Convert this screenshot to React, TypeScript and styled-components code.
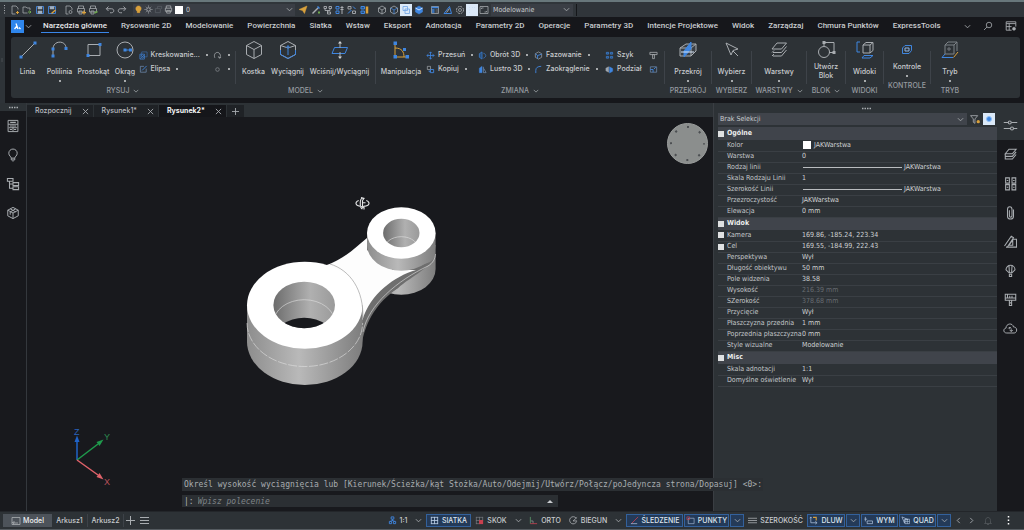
import React from 'react';
import styled, { createGlobalStyle, css } from 'styled-components';

const ui = `Roboto, "Liberation Sans", sans-serif`;
const label = `Inter, Roboto, sans-serif`;
const grid = `"DejaVu Sans Condensed", "DejaVu Sans", sans-serif`;
const mono = `"DejaVu Sans Mono", "Liberation Mono", monospace`;

const c = {
  panel: '#2d3236',
  dark: '#16171b',
  canvas: '#18191d',
  field: '#40444b',
  text: '#c9cccf',
  blue: '#3f86e0',
  icon: '#a9adb1',
  orange: '#d9a13c',
};

const Global = createGlobalStyle`
  *, *::before, *::after { box-sizing: border-box; }
  body { margin: 0; background: ${c.panel}; color: ${c.text}; font: 500 8px/10px ${ui}; }
  button, input, select { font: inherit; color: inherit; background: none; border: 0; padding: 0; margin: 0; border-radius: 0; }
  button { cursor: pointer; white-space: nowrap; }
  svg { display: block; flex: none; fill: none; stroke: ${c.icon}; stroke-width: 1; }
`;

const Page = styled.div`
  min-height: 100vh;
  display: flex;
  flex-direction: column;
  border-top: 2px solid #68777b;
  overflow: hidden;
`;

/* ---------- icons ---------- */
type IconProps = { s?: number; v?: string; children: React.ReactNode };
const Ico = ({ s = 20, v = '0 0 20 20', children }: IconProps) => (
  <svg width={s} height={s} viewBox={v} aria-hidden="true">{children}</svg>
);
const Chevron = ({ s = 7 }: { s?: number }) => (
  <Ico s={s} v="0 0 8 8"><path d="M1 2.5 4 5.5 7 2.5" stroke="#a5a9ad" /></Ico>
);
const B = c.blue;
const O = c.orange;

const art: Record<string, React.ReactNode> = {
  line: <><path d="M3 17 17 3" /><g fill={B} stroke="none"><path d="M1.500 15.500h3v3h-3zM15.500 1.500h3v3h-3z" /></g></>,
  poly: <><path d="M3 15V9C3 0 16 0 16 8" /><g fill={B} stroke="none"><path d="M1.500 14.500h3v3h-3zM1.500 7.500h3v3h-3zM14.500 7h3v3h-3z" /></g></>,
  rect: <><path d="M4 4.500h12v11H4z" /><g fill={B} stroke="none"><path d="M2.500 14h3v3h-3zM14.500 3h3v3h-3z" /></g></>,
  circle: <><circle cx="10" cy="10" r="8" /><path d="M10 10h7" stroke={B} /><g fill={B} stroke="none"><path d="M8.500 8.500h3v3h-3zM14 8.500h3v3h-3z" /></g></>,
  box: <><path d="M10 1.500 17.500 5.500v9L10 18.500 2.500 14.500v-9zM2.500 5.500 10 9.500l7.500-4M10 9.500v9" /></>,
  extrude: <><path d="M10 1.500 17.500 5.500v9L10 18.500 2.500 14.500v-9zM2.500 5.500 10 8l7.500-2.500" /><path d="M2.500 14.500 10 18.500l7.500-4M10 15V6M8 8l2-2.500L12 8M2.500 10v4.500M17.500 10v4.500" stroke={B} /></>,
  push: <><path d="M4.500 7.500h13L15 13.500H2z" stroke={B} /><path d="M10 2v6M10 12v6" /><g fill="#d0d3d5" stroke="none"><path d="M8 3.500 10 1l2 2.500zM8 16.500l2 2.500 2-2.500z" /></g></>,
  manip: <><path d="M4 4v13M4 17h12M4 8c7 0 9 4 9 9" stroke={O} /><g fill={B} stroke="none"><path d="M2.500 1.500h3.500v3.500H2.500zM2.500 15h3.500v3.500H2.500zM14.500 15h3.500v3.500h-3.500zM12 8h3v3h-3z" /></g></>,
  section: <><path d="M2 8 8 4h10v7l-5 5H2z" fill="#3b4046" /><path d="M2 8h11l5-4M13 8v8" /><path d="M6 17V11L13 2v7z" fill={B} stroke={B} /><path d="M3 12h13" stroke="#d5e4f7" /></>,
  cursor: <path d="M4 3 16 9l-5 1.500L9 15z M11 11l5 5" />,
  layers: <><path d="M3 9 8 3h9.500l-5 6z" /><path d="M4 12.500H12.500l5-6M4 16H12.500l5-6" /><path d="M3 12.500l2-2M3 16l2-2" /></>,
  block: <><path d="M8 2.500h10v10h-5" /><path d="M8 2.500V6" /><circle cx="8" cy="12" r="5.500" /><g fill={c.icon} stroke="none"><path d="M6.500 1h3v3h-3zM16.500 11h3v3h-3z" /></g></>,
  views: <><path d="M8 5 11 2.500h7v8L15 13H8zM8 5h7v8M15 5l3-2.500" /><path d="M5 2H2v10h3M7 18l2-2.500h9L15 18z" stroke={B} /></>,
  control: <><path d="M5.500 8 8 5.500h6.500v5L12 13.500H5.500z" stroke={B} /><path d="M8 8h4v3H8z" stroke="#8fb5e6" /></>,
  mode: <><path d="M5 5 8 2h9v9M5 5h9v9M14 5l3-3M5 5v9h9" stroke="#7d8287" /><path d="M9 7v4M7 9h4" stroke="#72777c" /><path d="M5 14l-3 3.500h11" stroke={B} /><path d="M18 12l-4.500 5.500" stroke={O} /></>,
  hatch: <><path d="M6 2h12v11H6z" stroke={B} /><path d="M2 7h10v11H2zM3 17 12 8M7 17l5-5M3 12l4-4" stroke={B} strokeWidth="1.500" /></>,
  ellipse: <><path d="M3 3v13h13V8M3 3h8" stroke="#7695bd" strokeWidth="1.500" /><path d="M7 12 17 2" stroke={B} strokeWidth="2" /></>,
  arc: <path d="M4 15C0 4 11 0 15 6s-1 9-1 9M12 12l2 4 4-2" strokeWidth="1.800" />,
  dotc: <circle cx="10" cy="10" r="4" stroke="#767b80" strokeWidth="2" />,
  move: <path d="M10 2v16M2 10h16M7 5l3-3 3 3M7 15l3 3 3-3M5 7l-3 3 3 3M15 7l3 3-3 3" stroke={B} strokeWidth="1.800" />,
  copy: <><path d="M3 3h7v7H3z" strokeWidth="1.500" /><path d="M10 10h7v7h-7zM7 12v3h3" stroke={B} strokeWidth="2" /></>,
  rot: <><path d="M9 2v16L3 14V6z" stroke={B} fill="#28517f" strokeWidth="1.500" /><path d="M12 5c7 2 7 8 0 11" strokeWidth="1.500" stroke={B} /></>,
  mirror: <><path d="M9 3v14H3V7z" fill={B} stroke={B} /><path d="M12 4v13h6L13 8" stroke="#7695bd" strokeWidth="1.500" /></>,
  chamfer: <><path d="M10 2l7 4v8l-7 4-7-4V6z" strokeWidth="1.500" /><path d="M3 6l5 4v7M8 10l9-3" stroke={B} strokeWidth="2" /></>,
  fillet: <path d="M4 18V12C4 6 8 3 16 3" stroke={B} strokeWidth="2" />,
  array: <path d="M3 3h5v4H3zM12 3h5v4h-5zM3 12h5v4H3zM12 12h5v4h-5z" stroke={B} strokeWidth="1.500" fill="#28517f" />,
  split: <><path d="M2 7l6-3v12l-6-3z" fill="#9aa6b3" /><path d="M10 4l7 4v6l-7 4z" fill={B} stroke={B} /></>,
  hammer: <path d="M2 3h16v5H2zM8 8h4v9H8z" strokeWidth="1.800" />,
  scale: <><path d="M3 4h14v12H3z" strokeWidth="1.500" stroke="#7695bd" /><path d="M3 10h6v6M11 9l4-4" stroke={B} strokeWidth="2" /></>,
  newf: <><path d="M4 2h8l4 4v3M4 2v16h7" strokeWidth="1.500" /><path d="M15 12v6M12 15h6" stroke={O} strokeWidth="2" /></>,
  open: <><path d="M2 16V4h6l2 2h6v4M2 16h9" strokeWidth="1.500" /><path d="M12 14h6M15 11l3 3-3 3" stroke="#6ea84f" strokeWidth="2" /></>,
  save: <><path d="M3 3h14v14H3z" stroke={B} strokeWidth="1.800" /><path d="M6 3h8v5H6zM6 12h8v5H6z" fill="#9fb0c2" /></>,
  saveas: <><path d="M3 3h14v14H3z" stroke={B} strokeWidth="1.800" /><path d="M6 3h8v5H6z" fill="#9fb0c2" /><path d="M9 17l8-7" stroke={O} strokeWidth="3" /></>,
  preview: <><path d="M4 2h8l4 4v4M4 2v16h5" strokeWidth="1.500" /><circle cx="13" cy="14" r="3" strokeWidth="1.500" /></>,
  print: <path d="M5 7V2h10v5M3 7h14v7H3zM6 12h8v6H6z" strokeWidth="1.800" />,
  printy: <><path d="M5 7V2h10v5M3 7h14v7H3zM6 12h6v6H6z" strokeWidth="1.500" /><path d="M16 11v8M12 15h8" stroke={O} strokeWidth="2.500" /></>,
  printg: <><path d="M5 7V2h10v5M3 7h14v7H3zM6 12h6v6H6z" strokeWidth="1.500" /><path d="M13 16l6-3" stroke="#6ea84f" strokeWidth="3" /></>,
  undo: <path d="M7 3 2.500 7.500 7 12M3 7.500h10c6 0 6 8 0 8h-3" strokeWidth="1.800" />,
  redo: <path d="M13 3l4.500 4.500L13 12M17 7.500H7c-6 0-6 8 0 8h3" strokeWidth="1.800" />,
  bulb: <path d="M7 14C1 8 5 2 10 2s9 6 3 12v3H7z" fill={O} stroke={O} />,
  sun: <><circle cx="10" cy="10" r="4" strokeWidth="2" /><path d="M10 1v3M10 16v3M1 10h3M16 10h3M4 4l2 2M14 14l2 2M16 4l-2 2M4 16l2-2" strokeWidth="1.500" /></>,
  lock: <path d="M3 8h11v9H3zM8 8V3h9v6" stroke="#5d6268" strokeWidth="1.500" />,
  arrowO: <path d="M2 9 18 2l-5 15-4-6z" fill={O} stroke={O} />,
  brush: <><path d="M3 17 14 6" strokeWidth="3" /><path d="M13 3l4 4" stroke={B} strokeWidth="3" /><path d="M14 15h4" stroke="#6ea84f" strokeWidth="4" /></>,
  tree: <path d="M2 3h5v4H2zM12 3h5v4h-5zM4 7v4h10V7M9 11v5M9 14h6v4H9z" strokeWidth="1.800" />,
  treeB: <><path d="M2 3h6v5H2zM2 12h6v5H2z" stroke={B} strokeWidth="2" /><path d="M14 2v16M11 5h6M11 9h6" strokeWidth="2" /></>,
  treeO: <><path d="M2 3h6v5H2zM11 12h6v5h-6z" strokeWidth="1.800" /><path d="M12 3l5 5M2 17l7-7" stroke={B} strokeWidth="2" /></>,
  listO: <><path d="M2 3h7v5H2zM2 12h7v5H2z" stroke={B} strokeWidth="2" fill="#28517f" /><path d="M14 3v14" stroke={O} strokeWidth="5" /></>,
  boxS: <path d="M10 2l7 4v8l-7 4-7-4V6zM3 6l7 4 7-4M10 10v8" strokeWidth="1.500" />,
  boxB: <><path d="M10 2l7 4v8l-7 4-7-4V6z" strokeWidth="1.500" /><path d="M3 6l7 4 7-4M10 10v8" stroke={B} strokeWidth="1.500" /></>,
  boxF: <><path d="M10 2l7 4v8l-7 4-7-4V6z" fill={B} stroke={B} /><path d="M3 6l7 4 7-4" stroke="#cfe2fa" strokeWidth="2" /></>,
  boxW: <path d="M4 3h9v8H4zM8 8h9v9H8z" stroke="#6aa0e6" strokeWidth="1.500" />,
  tableB: <><path d="M3 3h14v14H3z" strokeWidth="1.500" /><path d="M3 5h14M4 10h5M4 14h5" stroke={B} strokeWidth="3" /><path d="M11 10h5M11 14h5" /></>,
  draft: <><path d="M2 17 13 3l4 14z" stroke={B} strokeWidth="2" /><path d="M7 15l6-8" strokeWidth="2" /></>,
  gear: <><circle cx="10" cy="10" r="7" strokeWidth="2" strokeDasharray="3.500 2" /><circle cx="10" cy="10" r="3" strokeWidth="1.500" /></>,
  blank: <path d="M5 5h1M10 5h1M15 5h1M5 10h1M5 15h1" stroke="#9cc2ee" />,
  win: <><path d="M2 3h16v14H2z" strokeWidth="1.500" /><path d="M5 8V6h4M15 12v2h-4" strokeWidth="1.500" /></>,
  calc: <><path d="M3 2h14v16H3zM3 7.500h14M10 8v9M4 12.500h12" strokeWidth="1.400" /><path d="M6 4.800h8M5.500 10h3M11.500 10h3M5.500 15h3M11.500 15h3" strokeWidth="1.500" /></>,
  bulbO: <path d="M7.500 14.500C7.500 12 4 11.500 4 7.500a6 6 0 0 1 12 0c0 4-3.500 4.500-3.500 7zM7.500 14.500v2.500h5v-2.500M9 18.500h2" strokeWidth="1.400" />,
  struct: <path d="M2 2h8v4H2zM5 6v10h5M5 10h5M10 8h8v4h-8zM10 14h8v4h-8z" strokeWidth="1.500" />,
  cube: <path d="M10 2l7.500 4v8L10 18l-7.500-4V6zM2.500 6 10 10l7.500-4M10 10v8M6 4l8 4.500M14 4 6 8.500v4" strokeWidth="1.400" />,
  sliders: <><path d="M1 6h6M11 6h8M1 14h9M14 14h5" strokeWidth="1.400" /><circle cx="9" cy="6" r="2" strokeWidth="1.400" /><circle cx="12" cy="14" r="2" strokeWidth="1.400" /></>,
  layersR: <path d="M3 9 8 3h9.500l-5 6zM3 9v3.500h9.500l5-6M3 12.500V16h9.500l5-6" strokeWidth="1.400" />,
  grid4: <path d="M3.500 2.500h5v7h-5zM12 2.500h5v7h-5zM3.500 11.500h5v7h-5zM12 11.500h5v7h-5zM5 6h2M13.500 6h2M5 15h2M13.500 15h2" strokeWidth="1.400" />,
  clip: <path d="M14 6v9c0 5-8 5-8 0V6c0-5 6-5 6 0v8c0 3-3.500 3-3.500 0V7" strokeWidth="1.400" />,
  tri: <path d="M2 16 11 3l3 2-8 12M4 17.500h14V7h-4.500M8 15l5-7v7z" strokeWidth="1.400" />,
  balloon: <path d="M8 13 4 9a6 6 0 1 1 12 0l-4 4zM8.500 13 8 4M11.500 13 12 4M8.500 15v3h3v-3z" strokeWidth="1.400" />,
  paint: <path d="M3 3h14v8H3zM3 8h14M6 3v5M9 5v3M12 5v3M8.500 11v3M11.500 11v3M8.500 14.500h3V18h-3z" strokeWidth="1.400" />,
  cloud: <path d="M5 16c-5 0-5-6-1-6.500C4 3 13 2 14 8c6 0 5 8 1 8zM7 10l2-2 2 2M9 8v3M13 12l-2 2-2-2M11 14v-3" strokeWidth="1.300" />,
  search: <><circle cx="12" cy="8" r="5.500" strokeWidth="1.600" /><path d="M8 12l-6 6" strokeWidth="1.600" /></>,
  wins: <><path d="M2 3h16v3H2zM2 6v11h9M18 6v5M7 6v11M2 11h9" strokeWidth="1.500" /><circle cx="15" cy="14.500" r="2.500" fill={c.icon} /></>,
  filter: <><path d="M1 3h13l-5 6v8l-3-2V9z" strokeWidth="1.500" /><circle cx="15" cy="14" r="3" fill={O} stroke="none" /></>,
  people: <path d="M7 2h6v5H7zM10 7v4M3 12h5v5H3zM12 12h5v5h-5zM5 12l5-2 5 2" stroke={B} strokeWidth="2" />,
  gridS: <path d="M3 2v16M10 2v16M17 2v16M2 3h16M2 10h16M2 17h16" stroke="#bcd0e8" strokeWidth="1.800" />,
  snap: <><path d="M3 2v16M10 2v16M2 3h16M2 10h16M17 2v8M2 17h8" stroke="#777c82" strokeWidth="1.500" /><path d="M9 9h9v9H9z" fill="#c9404f" stroke="none" /></>,
  ortho: <><path d="M3 2v15" stroke="#5b9a6a" strokeWidth="1.800" /><path d="M3 17h15" stroke="#c9404f" strokeWidth="1.800" /><path d="M4 11h5v5" strokeWidth="1.300" /></>,
  polar: <><path d="M16 5a8 8 0 1 0 1 7" strokeWidth="1.800" /><path d="M9 11 18 3M9 11h9" strokeWidth="1.800" /></>,
  track: <><path d="M3 17 18 2" stroke="#c9404f" strokeWidth="1.800" /><path d="M2 17h14" stroke="#bcd0e8" strokeWidth="1.500" /></>,
  points: <><path d="M5 5h13v12H5z" stroke="#9fb4d0" strokeWidth="1.500" /><path d="M2 2h6v6H2z" stroke="#c9404f" strokeWidth="1.500" /></>,
  lwt: <path d="M0 5h20M0 10h20M0 15h20" strokeWidth="1.800" />,
  dluw: <><path d="M4 3v12h13M2 5l2-3 2 3M14 12l4 3-4 3" stroke="#bcd0e8" strokeWidth="1.500" /><path d="M9 3h7v7" stroke={O} strokeWidth="2.500" /></>,
  wym: <><path d="M3 2v10M1 7h6" stroke="#bcd0e8" strokeWidth="1.500" /><path d="M7 11h12v6H7z" stroke="#bcd0e8" strokeWidth="1.500" /></>,
  quad: <><path d="M2 2l6 14V8h8z" stroke="#bcd0e8" strokeWidth="1.500" /><path d="M9 7h10v10H9zM9 12h10M14 7v10" stroke="#bcd0e8" strokeWidth="1.300" /></>,
  bell: <path d="M5 14V9c0-8 10-8 10 0v5l2 1H3zM8 17h4" stroke="#54595e" strokeWidth="1.500" />,
  sheet: <path d="M2 3h16v14H2zM2 13h3v4M6 10v4h8" strokeWidth="1.600" />,
};
const I = ({ n, s = 10 }: { n: string; s?: number }) => <Ico s={s}>{art[n]}</Ico>;

/* ---------- quick access bar ---------- */
const QuickBar = styled.div`
  display: flex;
  align-items: center;
  height: 15px;
  background: #30353a;
`;
const QuickButton = styled.button<{ $on?: boolean; $gap?: number }>`
  display: grid;
  place-items: center;
  flex: none;
  width: 12px;
  height: 12px;
  margin-left: ${(p) => p.$gap ?? 0}px;
  ${(p) => p.$on && css`background: #dbe9f8;`}
`;
const BarGrip = styled.span`
  display: grid;
  place-items: center;
  flex: none;
  width: 9px;
`;
const LayerField = styled.label`
  display: flex;
  align-items: center;
  gap: 1px;
  flex: none;
  width: 162px;
  height: 12px;
  margin: 0 2px 0 5px;
  padding: 0 2px 0 1px;
  background: #3a3e45;
`;
const Swatch = styled.span`
  flex: none;
  width: 8px;
  height: 8px;
  margin: 0 2px 0 1px;
  background: #fff;
`;
const Select = styled.select`
  flex: 1;
  min-width: 0;
  appearance: none;
  outline: none;
  font: 7px/10px ${grid};
`;
const VisualField = styled(LayerField)`
  width: 82px;
  margin: 0 3px 0 1px;
  padding: 0 3px 0 2px;
`;
const Tick = styled.i`
  width: 1px;
  height: 12px;
  background: #15171a;
`;

/* ---------- ribbon ---------- */
const RibbonFrame = styled.section`
  display: flex;
  background: ${c.dark};
`;
const Grip = styled.div`
  display: grid;
  place-items: center start;
  flex: none;
  width: 5px;
  overflow: hidden;
  background: #2e3338;
`;
const RibbonBody = styled.div`
  flex: 1;
  min-width: 0;
  padding: 0 4px 5px 6px;
`;
const MenuRow = styled.nav`
  display: flex;
  align-items: center;
  height: 20px;
  padding-bottom: 2px;
`;
const Logo = styled.button`
  display: grid;
  place-items: center;
  width: 13px;
  height: 13px;
  background: #2f86ec;
  margin-right: 1px;
`;
const MenuTabs = styled.div`
  display: flex;
  gap: 14px;
  margin-left: 11px;
  flex: 1;
`;
const MenuTab = styled.button<{ $on?: boolean }>`
  position: relative;
  height: 14px;
  color: ${(p) => (p.$on ? '#e6e8ea' : c.text)};
  &::after {
    content: '';
    position: absolute;
    inset: auto -2px 0;
    height: 1px;
    background: ${(p) => (p.$on ? '#3a86e8' : 'transparent')};
  }
`;
const MenuTools = styled.div`
  display: flex;
  align-items: center;
  gap: 12px;
  padding-right: 3px;
`;
const Ribbon = styled.div`
  display: flex;
  height: 61px;
  border-radius: 3px;
  background: ${c.panel};
`;
const Group = styled.div<{ $w: number }>`
  display: flex;
  flex-direction: column;
  flex: none;
  width: ${(p) => p.$w}px;
`;
const Divider = styled.i`
  flex: none;
  width: 1px;
  margin: 14px 0 14px;
  background: #3e4349;
`;
const Tools = styled.div<{ $short?: boolean }>`
  display: flex;
  justify-content: center;
  height: ${(p) => (p.$short ? 42 : 47)}px;
`;
const Caption = styled.div`
  display: flex;
  align-items: center;
  justify-content: center;
  gap: 4px;
  height: 13px;
  font: 500 7px/10px ${label};
  color: #979ca1;
  white-space: nowrap;
`;
const BigButton = styled.button<{ $w: number; $short?: boolean }>`
  display: flex;
  flex-direction: column;
  align-items: center;
  flex: none;
  width: ${(p) => p.$w}px;
  padding-top: 3px;
  font: 500 7px/9px ${label};
  span { margin-top: ${(p) => (p.$short ? 2 : 7)}px; white-space: pre-line; }
`;
const Dot = styled.i`
  width: 2px;
  height: 2px;
  margin-top: 4px;
  border-radius: 1px;
  background: #d0d3d5;
`;
const SmallColumn = styled.div<{ $w: number }>`
  display: flex;
  flex-direction: column;
  gap: 4px;
  flex: none;
  width: ${(p) => p.$w}px;
  padding-top: 13px;
`;
const SmallButton = styled.button`
  display: flex;
  align-items: center;
  gap: 3px;
  height: 10px;
  font: 500 7px/10px ${label};
  ${Dot} { margin: 0 0 0 3px; }
`;

type Tool = [icon: string, text: string, width: number, drop?: boolean];
const Big = ({ t, short }: { t: Tool; short?: boolean }) => (
  <BigButton $w={t[2]} $short={short}>
    <I n={t[0]} s={20} />
    <span>{t[1]}</span>
    {t[3] && <Dot />}
  </BigButton>
);
type Small = [icon: string, text: string, drop?: boolean];
const Column = ({ w, items }: { w: number; items: Small[] }) => (
  <SmallColumn $w={w}>
    {items.map(([icon, text, drop]) => (
      <SmallButton key={icon} aria-label={text || icon}>
        <I n={icon} s={9} />
        {text}
        {drop && <Dot />}
      </SmallButton>
    ))}
  </SmallColumn>
);
const RibbonGroup = ({ w, title, drop, short, children }: {
  w: number; title: string; drop?: boolean; short?: boolean; children: React.ReactNode;
}) => (
  <>
    <Group $w={w}>
      <Tools $short={short}>{children}</Tools>
      <Caption>{title}{drop && <Chevron s={6} />}</Caption>
    </Group>
    <Divider />
  </>
);

/* ---------- workspace ---------- */
const Workspace = styled.main`
  position: relative;
  flex: 1;
  display: flex;
  background: ${c.panel};
`;
const Rail = styled.aside`
  display: flex;
  flex-direction: column;
  align-items: center;
  flex: none;
  width: 27px;
  background: ${c.canvas};
`;
const LeftRail = styled(Rail)`
  border-right: 1px solid #34383d;
`;
const RailHead = styled.div`
  display: grid;
  place-items: center;
  width: 100%;
  height: 8px;
  background: ${c.panel};
`;
const RailButton = styled.button<{ $on?: boolean }>`
  display: grid;
  place-items: center;
  width: 100%;
  height: 29px;
  background: ${(p) => (p.$on ? c.panel : 'none')};
`;
const Center = styled.section`
  flex: 1;
  min-width: 0;
  display: flex;
  flex-direction: column;
`;
const FileTabs = styled.div`
  display: flex;
  height: 14px;
  padding-top: 2px;
`;
const FileTab = styled.div<{ $on?: boolean }>`
  display: flex;
  align-items: center;
  gap: 10px;
  margin-right: 1px;
  padding: 0 4px 0 8px;
  background: ${(p) => (p.$on ? '#15161a' : '#1f2226')};
  color: ${(p) => (p.$on ? '#f2f3f4' : '#b9bcc0')};
  button { font: ${(p) => (p.$on ? 700 : 500)} 7px/12px ${label}; }
`;
const AddTab = styled(FileTab)`
  padding: 0 5px;
`;
const Viewport = styled.div`
  position: relative;
  flex: 1;
  background: ${c.canvas};
`;
const OnCanvas = styled.div<{ $x?: number; $r?: number; $y?: number; $b?: number }>`
  position: absolute;
  ${(p) => p.$x !== undefined && css`left: ${p.$x}px;`}
  ${(p) => p.$r !== undefined && css`right: ${p.$r}px;`}
  ${(p) => p.$y !== undefined && css`top: ${p.$y}px;`}
  ${(p) => p.$b !== undefined && css`bottom: ${p.$b}px;`}
`;
const CommandLine = styled.div`
  position: absolute;
  left: 182px;
  bottom: 4px;
  font: 8px/13px ${mono};
  white-space: nowrap;
`;
const CommandLog = styled.output`
  display: block;
  padding: 0 1px 0 2px;
  background: #2b2f33;
  color: #a9adb0;
`;
const CommandField = styled.label`
  display: flex;
  align-items: center;
  width: 376px;
  height: 12px;
  margin-top: 4px;
  padding: 0 5px 0 2px;
  background: #2b2f33;
  color: #b5b8bb;
  input { flex: 1; margin-left: 4px; outline: none; font-style: italic; }
  input::placeholder { color: #7e8387; opacity: 1; }
`;

/* ---------- properties ---------- */
const Properties = styled.aside`
  flex: none;
  width: 284px;
  padding-left: 4px;
  border-left: 1px solid #3a3e43;
  background: ${c.panel};
`;
const PanelGrip = styled.div`
  display: grid;
  place-items: center;
  height: 10px;
  padding-left: 18px;
`;
const Selection = styled.div`
  display: flex;
  align-items: center;
  gap: 2px;
  height: 12px;
  margin-bottom: 2px;
  padding-right: 2px;
`;
const SelectionField = styled(LayerField)`
  flex: 1;
  width: auto;
  margin: 0;
  padding: 0 3px 0 2px;
  background: ${c.field};
`;
const PropTable = styled.table`
  width: 100%;
  table-layout: fixed;
  border-collapse: collapse;
  font: 7px/9px ${grid};
  th, td { padding: 0; white-space: nowrap; text-align: left; font-weight: 400; }
  col:nth-child(1) { width: 9px; }
  col:nth-child(2) { width: 75px; }
`;
const HeadRow = styled.tr`
  height: 13px;
  background: #40444b;
  && th { font-weight: 700; color: #eceded; }
`;
const PropRow = styled.tr<{ $off?: boolean }>`
  height: 11px;
  border-bottom: 1px solid #3a3f44;
  color: #c4c7ca;
  td { color: ${(p) => (p.$off ? '#686d72' : '#d0d2d4')}; }
`;
const Toggle = styled.button`
  display: block;
  width: 6px;
  height: 6px;
  background: #dfe1e2;
`;
const Value = styled.span`
  display: flex;
  align-items: center;
  gap: 1px;
`;
const Stroke = styled.i`
  width: 99px;
  height: 1px;
  margin: 0 1px;
  background: #b9bcbf;
`;

type Prop = { k: string; v: string; mark?: 'swatch' | 'line'; off?: boolean; open?: boolean };
const sections: { title: string; rows: Prop[] }[] = [
  { title: 'Ogólne', rows: [
    { k: 'Kolor', v: 'JAKWarstwa', mark: 'swatch' },
    { k: 'Warstwa', v: '0' },
    { k: 'Rodzaj linii', v: 'JAKWarstwa', mark: 'line' },
    { k: 'Skala Rodzaju Linii', v: '1' },
    { k: 'Szerokość Linii', v: 'JAKWarstwa', mark: 'line' },
    { k: 'Przezroczystość', v: 'JAKWarstwa' },
    { k: 'Elewacja', v: '0 mm' },
  ] },
  { title: 'Widok', rows: [
    { k: 'Kamera', v: '169.86, -185.24, 223.34', open: true },
    { k: 'Cel', v: '169.55, -184.99, 222.43', open: true },
    { k: 'Perspektywa', v: 'Wył' },
    { k: 'Długość obiektywu', v: '50 mm' },
    { k: 'Pole widzenia', v: '38.58' },
    { k: 'Wysokość', v: '216.39 mm', off: true },
    { k: 'SZerokość', v: '378.68 mm', off: true },
    { k: 'Przycięcie', v: 'Wył' },
    { k: 'Płaszczyzna przednia', v: '1 mm' },
    { k: 'Poprzednia płaszczyzna', v: '0 mm' },
    { k: 'Style wizualne', v: 'Modelowanie' },
  ] },
  { title: 'Misc', rows: [
    { k: 'Skala adnotacji', v: '1:1' },
    { k: 'Domyślne oświetlenie', v: 'Wył' },
  ] },
];

/* ---------- status bar ---------- */
const StatusBar = styled.footer`
  display: flex;
  align-items: center;
  height: 19px;
  padding: 0 10px 0 3px;
  border-top: 1px solid #23262a;
  border-bottom: 1px solid #555b60;
  background: ${c.panel};
`;
const SheetTab = styled.button<{ $on?: boolean }>`
  display: flex;
  align-items: center;
  justify-content: center;
  gap: 2px;
  width: ${(p) => (p.$on ? 49 : 36)}px;
  height: 13px;
  font: 500 7px/10px ${label};
  background: ${(p) => (p.$on ? '#4d535a' : 'none')};
  color: ${(p) => (p.$on ? '#f0f1f2' : c.text)};
  ${(p) => !p.$on && css`border-right: 1px solid #3d4248;`}
`;
const StatusTools = styled.div`
  display: flex;
  align-items: center;
  margin-left: auto;
`;
const StatusButton = styled.button<{ $w: number; $on?: boolean }>`
  display: flex;
  align-items: center;
  justify-content: center;
  gap: 3px;
  flex: none;
  width: ${(p) => p.$w}px;
  height: 13px;
  border: 1px solid ${(p) => (p.$on ? '#33619c' : 'transparent')};
  background: ${(p) => (p.$on ? '#243a58' : 'none')};
  margin-right: 1px;
  color: ${(p) => (p.$on ? '#dfe6ef' : c.text)};
  font: 500 7px/10px ${label};
`;

const status: { icon: string; text: string; w: number; on?: boolean; drop?: number }[] = [
  { icon: 'people', text: '1:1', w: 27, drop: 13 },
  { icon: 'gridS', text: 'SIATKA', w: 45, on: true },
  { icon: 'snap', text: 'SKOK', w: 38, drop: 14 },
  { icon: 'ortho', text: 'ORTO', w: 38 },
  { icon: 'polar', text: 'BIEGUN', w: 46, drop: 13 },
  { icon: 'track', text: 'ŚLEDZENIE', w: 57, on: true },
  { icon: 'points', text: 'PUNKTY', w: 45, on: true, drop: 14 },
  { icon: 'lwt', text: 'SZEROKOŚĆ', w: 61 },
  { icon: 'dluw', text: 'DLUW', w: 38, on: true, drop: 14 },
  { icon: 'wym', text: 'WYM', w: 37, on: true },
  { icon: 'quad', text: 'QUAD', w: 37, on: true, drop: 14 },
];

/* ---------- drawing ---------- */
const Part = () => (
  <svg width="200" height="195" viewBox="240 195 200 195" role="img" aria-label="Model 3D">
    <defs>
      <linearGradient id="side" x1="0" x2="1">
        <stop offset="0" stopColor="#8d8d8d" /><stop offset=".45" stopColor="#b9b9b9" /><stop offset="1" stopColor="#7d7d7d" />
      </linearGradient>
      <linearGradient id="hole" x1="0" x2="1">
        <stop offset="0" stopColor="#6c6c6c" /><stop offset=".6" stopColor="#b0b0b0" /><stop offset="1" stopColor="#9a9a9a" />
      </linearGradient>
      <clipPath id="bigHole"><ellipse cx="304.200" cy="305" rx="30.800" ry="23.300" /></clipPath>
      <clipPath id="smallHole"><ellipse cx="401.300" cy="233" rx="18.200" ry="14.300" /></clipPath>
    </defs>
    <g stroke="none">
      <path d="M367 245V269A34.300 25.800 0 0 0 435.600 269V245z" fill="url(#side)" />
      <path d="M367 245V300H380L398 288 414 268z" fill="#6e6e6e" />
      <path d="M414 268 430 262C434 259 435 257 435.600 256C430 268 412 276 398 288C382 299 368 314 362 342L358 340V316C366 296 388 276 414 268z" fill="#6e6e6e" />
      <path d="M324 266C345 259 356 247 367 238V250L393 270H416C395 276 370 294 362.500 320L330 320z" fill="#fdfdfd" />
      <path d="M367 233V245A34.300 25.800 0 0 0 435.600 245V233z" fill="url(#side)" />
      <ellipse cx="401.300" cy="233" rx="34.300" ry="25.800" fill="#fff" />
      <ellipse cx="401.300" cy="233" rx="18.200" ry="14.300" fill="url(#hole)" />
      <path d="M247 305V341.500A57.800 43.500 0 0 0 362.600 341.500V305z" fill="url(#side)" />
      <ellipse cx="304.800" cy="305.300" rx="57.800" ry="43.500" fill="#fff" />
      <ellipse cx="304.200" cy="305" rx="30.800" ry="23.300" fill="url(#hole)" />
      <g clipPath="url(#bigHole)"><ellipse cx="304.200" cy="341" rx="30.800" ry="23.300" fill="#18191d" /></g>
    </g>
    <g stroke="#e0e0e0" strokeWidth=".6">
      <g clipPath="url(#bigHole)"><ellipse cx="304.200" cy="323" rx="30.800" ry="23.300" /></g>
      <g clipPath="url(#smallHole)"><ellipse cx="401.300" cy="251" rx="18.200" ry="14.300" /></g>
      <path d="M247 323A57.800 43.500 0 0 0 362.600 323" strokeDasharray="9 1.500" />
      <path d="M363 332C368 305 398 280 428 266C433 263 435 259 435.600 254" />
    </g>
    <path d="M330 264C350 270 364 290 362.800 318" stroke="#8f8f8f" strokeWidth=".6" />
  </svg>
);

const menu = ['Narzędzia główne', 'Rysowanie 2D', 'Modelowanie', 'Powierzchnia', 'Siatka', 'Wstaw', 'Eksport', 'Adnotacja',
  'Parametry 2D', 'Operacje', 'Parametry 3D', 'Intencje Projektowe', 'Widok', 'Zarządzaj', 'Chmura Punktów', 'ExpressTools'];

const quick: [icon: string, gap?: number, on?: boolean][] = [
  ['newf'], ['open'], ['save', 1], ['saveas'], ['preview', 5], ['printy'], ['printg'], ['undo', 5], ['redo'],
];
const quickRight: [icon: string, gap?: number, on?: boolean][] = [
  ['arrowO'], ['brush', 1], ['tree'], ['treeB'], ['treeO'], ['listO', 1], ['boxS', 5], ['boxB'], ['boxW', 0, true],
  ['boxF', 1], ['tableB', 4], ['draft', 1], ['gear'], ['blank', 0, true], ['win'],
];
const Dots = () => (
  <Ico s={9} v="0 0 9 9"><path d="M0 4.500h9" strokeDasharray="1.500 1" strokeWidth="1.300" /></Ico>
);
const Close = () => <Ico s={7} v="0 0 8 8"><path d="M1 1l6 6M7 1 1 7" /></Ico>;

export default function App() {
  return (
    <Page>
      <Global />
      <QuickBar>
        <BarGrip><Ico s={9} v="0 0 9 9"><path d="M4.500 0v9" strokeDasharray="1 1.500" /></Ico></BarGrip>
        {quick.map(([n, gap]) => <QuickButton key={n} $gap={gap} aria-label={n}><I n={n} /></QuickButton>)}
        <LayerField>
          <I n="bulb" s={9} /><I n="sun" s={9} /><I n="lock" s={9} /><I n="print" s={9} /><Swatch />
          <Select aria-label="Warstwa"><option>0</option></Select>
          <Chevron />
        </LayerField>
        {quickRight.map(([n, gap, on]) => (
          <QuickButton key={n} $gap={gap} $on={on} aria-label={n}><I n={n} /></QuickButton>
        ))}
        <VisualField>
          <Select aria-label="Styl wizualny"><option>Modelowanie</option></Select>
          <Chevron />
        </VisualField>
        <Tick />
      </QuickBar>

      <RibbonFrame>
        <Grip><Ico s={4} v="0 0 4 9"><path d="M2 0v9" strokeDasharray="1 1" /></Ico></Grip>
        <RibbonBody>
          <MenuRow>
            <Logo aria-label="Menu programu"><Ico s={9} v="0 0 9 9"><path d="M3 1.500 5 7M4 4 1.500 7M6 5.500 7.500 7" stroke="#fff" strokeWidth="1.300" /></Ico></Logo>
            <Chevron />
            <MenuTabs>
              {menu.map((m, i) => <MenuTab key={m} $on={i === 0}>{m}</MenuTab>)}
            </MenuTabs>
            <MenuTools>
              <Chevron />
              <I n="search" />
              <I n="wins" s={12} />
            </MenuTools>
          </MenuRow>
          <Ribbon>
            <RibbonGroup w={224} title="RYSUJ" drop>
              <Big t={['line', 'Linia', 32]} />
              <Big t={['poly', 'Polilinia', 32, true]} />
              <Big t={['rect', 'Prostokąt', 36]} />
              <Big t={['circle', 'Okrąg', 27, true]} />
              <Column w={74} items={[['hatch', 'Kreskowanie...', true], ['ellipse', 'Elipsa', true]]} />
              <Column w={22} items={[['arc', '', true], ['dotc', '', true]]} />
            </RibbonGroup>
            <RibbonGroup w={139} title="MODEL" drop>
              <Big t={['box', 'Kostka', 32]} />
              <Big t={['extrude', 'Wyciągnij', 36]} />
              <Big t={['push', 'Wciśnij/Wyciągnij', 68]} />
            </RibbonGroup>
            <RibbonGroup w={288} title="ZMIANA" drop>
              <Big t={['manip', 'Manipulacja', 50]} />
              <Column w={52} items={[['move', 'Przesuń', true], ['copy', 'Kopiuj', true]]} />
              <Column w={56} items={[['rot', 'Obrót 3D', true], ['mirror', 'Lustro 3D', true]]} />
              <Column w={71} items={[['chamfer', 'Fazowanie', true], ['fillet', 'Zaokrąglenie', true]]} />
              <Column w={44} items={[['array', 'Szyk'], ['split', 'Podział']]} />
              <Column w={15} items={[['hammer', ''], ['scale', '']]} />
            </RibbonGroup>
            <RibbonGroup w={46} title="PRZEKRÓJ"><Big t={['section', 'Przekrój', 40, true]} /></RibbonGroup>
            <RibbonGroup w={39} title="WYBIERZ"><Big t={['cursor', 'Wybierz', 38, true]} /></RibbonGroup>
            <RibbonGroup w={54} title="WARSTWY" drop><Big t={['layers', 'Warstwy', 52, true]} /></RibbonGroup>
            <RibbonGroup w={38} title="BLOK" drop><Big short t={['block', 'Utwórz\nBlok', 38]} /></RibbonGroup>
            <RibbonGroup w={37} title="WIDOKI"><Big t={['views', 'Widoki', 37, true]} /></RibbonGroup>
            <RibbonGroup w={46} title="KONTROLE" short><Big short t={['control', 'Kontrole', 44, true]} /></RibbonGroup>
            <Group $w={38}>
              <Tools><Big t={['mode', 'Tryb', 38, true]} /></Tools>
              <Caption>TRYB</Caption>
            </Group>
          </Ribbon>
        </RibbonBody>
      </RibbonFrame>

      <Workspace>
        <LeftRail>
          <RailHead><Dots /></RailHead>
          {['calc', 'bulbO', 'struct', 'cube'].map((n) => (
            <RailButton key={n} aria-label={n}><I n={n} s={14} /></RailButton>
          ))}
        </LeftRail>
        <Center>
          <FileTabs>
            {['Rozpocznij', 'Rysunek1*', 'Rysunek2*'].map((t, i) => (
              <FileTab key={t} $on={i === 2}>
                <button>{t}</button>
                <button aria-label={`Zamknij ${t}`}><Close /></button>
              </FileTab>
            ))}
            <AddTab><button aria-label="Nowa karta"><Ico s={7} v="0 0 8 8"><path d="M4 0v8M0 4h8" /></Ico></button></AddTab>
          </FileTabs>
          <Viewport>
            <OnCanvas $x={213} $y={78}><Part /></OnCanvas>
            <OnCanvas $x={328} $y={79}>
              <Ico s={15} v="0 0 20 20">
                <path d="M5 6C-1 8 0 14 10 14s11-6 5-8M10 3C7 3 7 6 7 10s1 7 3 7M8 2l4 1-2 3M10 6v8M10 9h4M8 17l4-3v4" stroke="#e4e5e6" strokeWidth="1.500" />
              </Ico>
            </OnCanvas>
            <OnCanvas $r={5} $y={6}>
              <Ico s={41} v="0 0 41 41">
                <circle cx="20.500" cy="20.500" r="20" fill="#8b8e8d" stroke="#9a9d9c" />
                <circle cx="20.500" cy="20.500" r="16.500" stroke="#4c4f52" strokeWidth="2" strokeDasharray="2 10.960" strokeDashoffset="1" />
              </Ico>
            </OnCanvas>
            <OnCanvas $x={46} $b={22}>
              <svg width="40" height="64" viewBox="73 425 40 64" aria-label="Układ współrzędnych">
                <path d="M77 460V440" stroke="#1f63c9" strokeWidth="1.500" /><path d="M74.500 442 77 435.500 79.500 442z" fill="#1f63c9" stroke="none" />
                <path d="M77 460 98 444" stroke="#1f9a4c" strokeWidth="1.500" /><path d="M103.500 439.500 99.500 446 96.500 442z" fill="#1f9a4c" stroke="none" />
                <path d="M77 460 98 475" stroke="#e0626a" strokeWidth="1.500" /><path d="M103.500 479.500 96.500 477 99.500 473z" fill="#e0626a" stroke="none" />
                <g stroke="none" fontFamily="Liberation Sans, sans-serif" fontSize="9" fontWeight="400">
                  <text x="74" y="435" fill="#2a62b8">Z</text><text x="104" y="440" fill="#2c8a50">Y</text><text x="104" y="485" fill="#b9525a">X</text>
                </g>
              </svg>
            </OnCanvas>
          </Viewport>
        </Center>
        <Properties>
          <PanelGrip><Dots /></PanelGrip>
          <Selection>
            <SelectionField>
              <Select aria-label="Selekcja"><option>Brak Selekcji</option></Select>
              <Chevron />
            </SelectionField>
            <QuickButton aria-label="Filtr"><I n="filter" s={11} /></QuickButton>
            <QuickButton $on aria-label="Wybierz obiekty"><Ico s={10}><circle cx="10" cy="10" r="5" fill={B} stroke="#8fc0f7" strokeWidth="2" /></Ico></QuickButton>
          </Selection>
          <PropTable>
            <colgroup><col /><col /><col /></colgroup>
            {sections.map((s) => (
              <tbody key={s.title}>
                <HeadRow><th><Toggle aria-label={`Zwiń ${s.title}`} /></th><th colSpan={2}>{s.title}</th></HeadRow>
                {s.rows.map((r) => (
                  <PropRow key={r.k} $off={r.off}>
                    <th>{r.open && <Toggle aria-label={`Rozwiń ${r.k}`} />}</th>
                    <th scope="row">{r.k}</th>
                    <td><Value>{r.mark === 'swatch' && <Swatch />}{r.mark === 'line' && <Stroke />}{r.v}</Value></td>
                  </PropRow>
                ))}
              </tbody>
            ))}
          </PropTable>
        </Properties>
        <Rail>
          <RailHead />
          {['sliders', 'layersR', 'grid4', 'clip', 'tri', 'balloon', 'paint', 'cloud'].map((n, i) => (
            <RailButton key={n} $on={i === 0} aria-label={n}><I n={n} s={15} /></RailButton>
          ))}
        </Rail>
        <CommandLine>
          <CommandLog>
            Określ wysokość wyciągnięcia lub [Kierunek/Ścieżka/kąt Stożka/Auto/Odejmij/Utwórz/Połącz/poJedyncza strona/Dopasuj] &lt;0&gt;:
          </CommandLog>
          <CommandField>
            |:<input placeholder="Wpisz polecenie" />
            <Ico s={6} v="0 0 6 6"><path d="M0 5 3 2 6 5z" fill="#c9cccf" stroke="none" /></Ico>
          </CommandField>
        </CommandLine>
      </Workspace>

      <StatusBar>
        <SheetTab $on><I n="sheet" />Model</SheetTab>
        <SheetTab>Arkusz1</SheetTab>
        <SheetTab>Arkusz2</SheetTab>
        <QuickButton aria-label="Dodaj arkusz"><Ico s={9} v="0 0 9 9"><path d="M4.500 0v9M0 4.500h9" /></Ico></QuickButton>
        <QuickButton $gap={2} aria-label="Lista arkuszy"><Ico s={9} v="0 0 9 9"><path d="M0 1.500h9M0 4.500h9M0 7.500h9" /></Ico></QuickButton>
        <StatusTools>
          {status.map((t) => (
            <React.Fragment key={t.text}>
              <StatusButton $w={t.w} $on={t.on}><I n={t.icon} s={9} />{t.text}</StatusButton>
              {t.drop && <StatusButton $w={t.drop} $on={t.on} aria-label={`Opcje ${t.text}`}><Chevron /></StatusButton>}
            </React.Fragment>
          ))}
          <QuickButton aria-label="Wstecz"><Ico s={7} v="0 0 8 8"><path d="M5.500 1 2.500 4l3 3" /></Ico></QuickButton>
          <QuickButton $gap={1} aria-label="Dalej"><Ico s={7} v="0 0 8 8"><path d="M2.500 1l3 3-3 3" /></Ico></QuickButton>
          <QuickButton $gap={5} aria-label="Powiadomienia"><I n="bell" /></QuickButton>
          <QuickButton $gap={8} aria-label="Więcej"><Ico s={9} v="0 0 9 9"><path d="M4.500 0v9" strokeDasharray="1.500 2" strokeWidth="1.500" stroke="#fff" /></Ico></QuickButton>
        </StatusTools>
      </StatusBar>
    </Page>
  );
}
